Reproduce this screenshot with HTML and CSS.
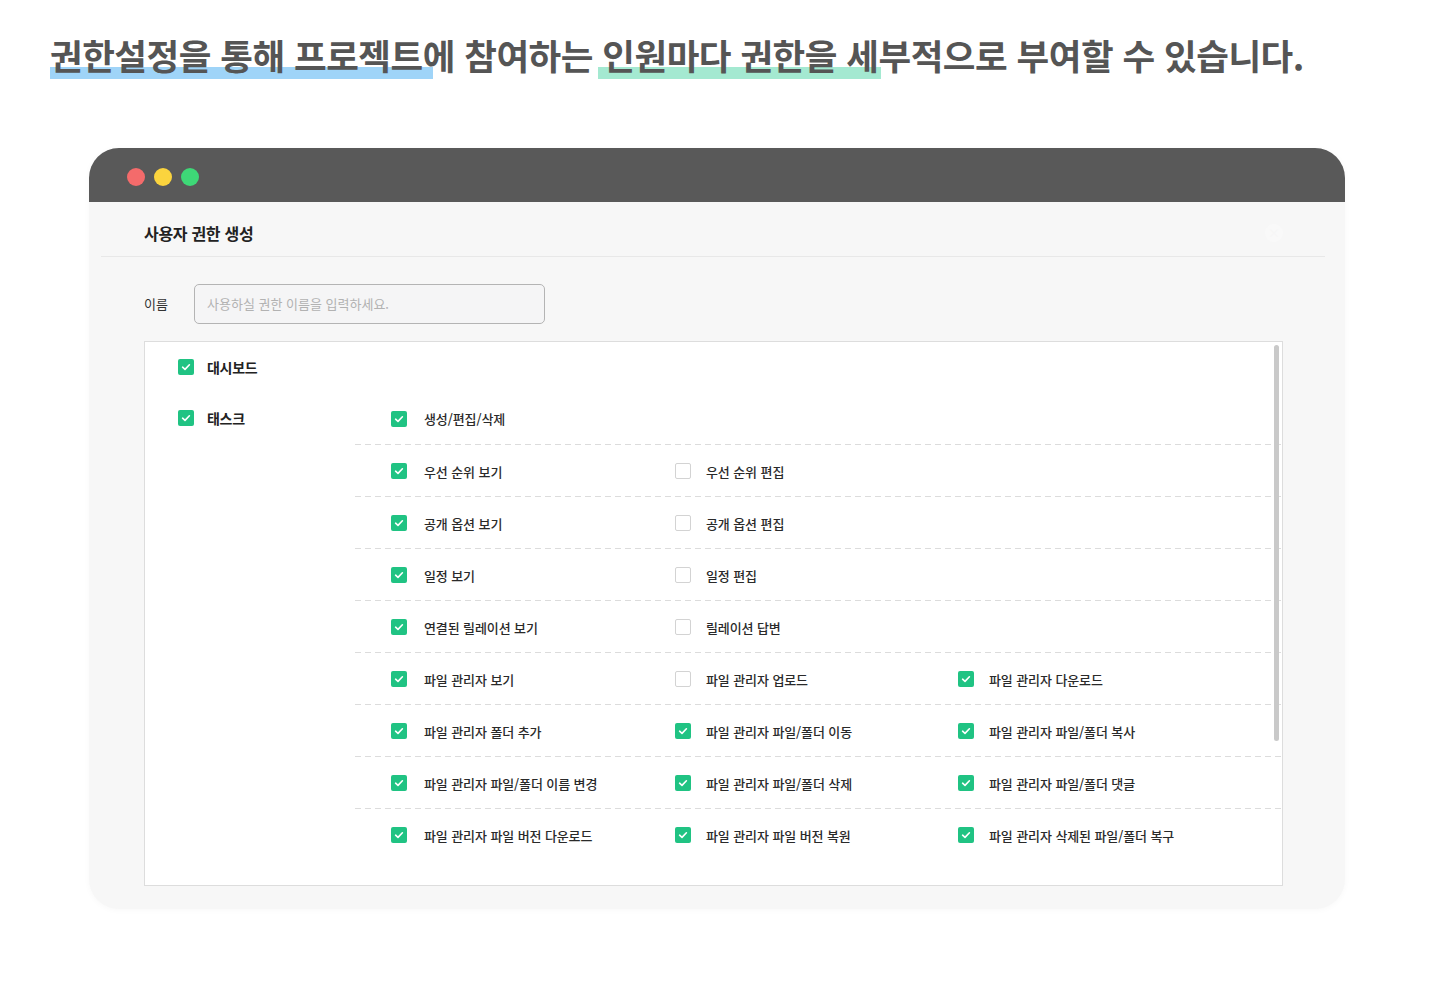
FILE: index.html
```html
<!DOCTYPE html>
<html lang="ko">
<head>
<meta charset="utf-8">
<title>사용자 권한 생성</title>
<link rel="stylesheet" href="styles.css">
</head>
<body>
<div class="page">
  <h1 class="headline"><span class="hl hl-blue">권한설정을 통해 프로젝트</span>에 참여하는 <span class="hl hl-green">인원마다 권한을</span> 세부적으로 부여할 수 있습니다.</h1>

  <div class="window">
    <div class="titlebar">
      <span class="dot dot-red"></span>
      <span class="dot dot-yellow"></span>
      <span class="dot dot-green"></span>
    </div>
    <div class="dialog-head">
      <span class="dialog-title">사용자 권한 생성</span>
      <span class="close-btn">×</span>
    </div>
    <div class="form-row">
      <span class="form-label">이름</span>
      <div class="input">사용하실 권한 이름을 입력하세요.</div>
    </div>

    <div class="perm-box">
      <div class="scrollbar"></div>
      <div class="perm-top">
        <span class="cb on"><svg viewBox="0 0 16 16"><path d="M4.6 8.2 L7 10.4 L11.4 5.8"/></svg></span>
        <span class="group-name">대시보드</span>
      </div>
      <div class="group">
        <div class="group-label">
          <span class="cb on"><svg viewBox="0 0 16 16"><path d="M4.6 8.2 L7 10.4 L11.4 5.8"/></svg></span>
          <span class="group-name">태스크</span>
        </div>
        <div class="group-items">
          <div class="item-row">
            <div class="cell"><span class="cb on"><svg viewBox="0 0 16 16"><path d="M4.6 8.2 L7 10.4 L11.4 5.8"/></svg></span><span class="item-label">생성/편집/삭제</span></div>
          </div>
          <div class="item-row">
            <div class="cell"><span class="cb on"><svg viewBox="0 0 16 16"><path d="M4.6 8.2 L7 10.4 L11.4 5.8"/></svg></span><span class="item-label">우선 순위 보기</span></div>
            <div class="cell"><span class="cb off"></span><span class="item-label">우선 순위 편집</span></div>
          </div>
          <div class="item-row">
            <div class="cell"><span class="cb on"><svg viewBox="0 0 16 16"><path d="M4.6 8.2 L7 10.4 L11.4 5.8"/></svg></span><span class="item-label">공개 옵션 보기</span></div>
            <div class="cell"><span class="cb off"></span><span class="item-label">공개 옵션 편집</span></div>
          </div>
          <div class="item-row">
            <div class="cell"><span class="cb on"><svg viewBox="0 0 16 16"><path d="M4.6 8.2 L7 10.4 L11.4 5.8"/></svg></span><span class="item-label">일정 보기</span></div>
            <div class="cell"><span class="cb off"></span><span class="item-label">일정 편집</span></div>
          </div>
          <div class="item-row">
            <div class="cell"><span class="cb on"><svg viewBox="0 0 16 16"><path d="M4.6 8.2 L7 10.4 L11.4 5.8"/></svg></span><span class="item-label">연결된 릴레이션 보기</span></div>
            <div class="cell"><span class="cb off"></span><span class="item-label">릴레이션 답변</span></div>
          </div>
          <div class="item-row">
            <div class="cell"><span class="cb on"><svg viewBox="0 0 16 16"><path d="M4.6 8.2 L7 10.4 L11.4 5.8"/></svg></span><span class="item-label">파일 관리자 보기</span></div>
            <div class="cell"><span class="cb off"></span><span class="item-label">파일 관리자 업로드</span></div>
            <div class="cell"><span class="cb on"><svg viewBox="0 0 16 16"><path d="M4.6 8.2 L7 10.4 L11.4 5.8"/></svg></span><span class="item-label">파일 관리자 다운로드</span></div>
          </div>
          <div class="item-row">
            <div class="cell"><span class="cb on"><svg viewBox="0 0 16 16"><path d="M4.6 8.2 L7 10.4 L11.4 5.8"/></svg></span><span class="item-label">파일 관리자 폴더 추가</span></div>
            <div class="cell"><span class="cb on"><svg viewBox="0 0 16 16"><path d="M4.6 8.2 L7 10.4 L11.4 5.8"/></svg></span><span class="item-label">파일 관리자 파일/폴더 이동</span></div>
            <div class="cell"><span class="cb on"><svg viewBox="0 0 16 16"><path d="M4.6 8.2 L7 10.4 L11.4 5.8"/></svg></span><span class="item-label">파일 관리자 파일/폴더 복사</span></div>
          </div>
          <div class="item-row">
            <div class="cell"><span class="cb on"><svg viewBox="0 0 16 16"><path d="M4.6 8.2 L7 10.4 L11.4 5.8"/></svg></span><span class="item-label">파일 관리자 파일/폴더 이름 변경</span></div>
            <div class="cell"><span class="cb on"><svg viewBox="0 0 16 16"><path d="M4.6 8.2 L7 10.4 L11.4 5.8"/></svg></span><span class="item-label">파일 관리자 파일/폴더 삭제</span></div>
            <div class="cell"><span class="cb on"><svg viewBox="0 0 16 16"><path d="M4.6 8.2 L7 10.4 L11.4 5.8"/></svg></span><span class="item-label">파일 관리자 파일/폴더 댓글</span></div>
          </div>
          <div class="item-row">
            <div class="cell"><span class="cb on"><svg viewBox="0 0 16 16"><path d="M4.6 8.2 L7 10.4 L11.4 5.8"/></svg></span><span class="item-label">파일 관리자 파일 버전 다운로드</span></div>
            <div class="cell"><span class="cb on"><svg viewBox="0 0 16 16"><path d="M4.6 8.2 L7 10.4 L11.4 5.8"/></svg></span><span class="item-label">파일 관리자 파일 버전 복원</span></div>
            <div class="cell"><span class="cb on"><svg viewBox="0 0 16 16"><path d="M4.6 8.2 L7 10.4 L11.4 5.8"/></svg></span><span class="item-label">파일 관리자 삭제된 파일/폴더 복구</span></div>
          </div>
        </div>
      </div>
    </div>
  </div>
</div>
</body>
</html>
```

FILE: styles.css
```css
* { box-sizing: border-box; }

body {
  margin: 0;
  background: #ffffff;
  font-family: "Noto Sans CJK KR", "Noto Sans", sans-serif;
  color: #222;
}

.page {
  padding: 29px 0 40px 50px;
}

.headline {
  margin: 0;
  font-size: 35.5px;
  font-weight: 700;
  line-height: 52px;
  letter-spacing: -0.5px;
  color: #555555;
  white-space: nowrap;
  position: relative;
  isolation: isolate;
}

.hl {
  position: relative;
}

.hl::after {
  content: "";
  position: absolute;
  left: 0;
  right: 0;
  bottom: 1px;
  height: 12px;
  z-index: -1;
}

.hl-blue::after {
  right: -10px;
  background: #9fd4f8;
}

.hl-green::after {
  left: -4px;
  right: -44px;
  background: #a4e9d1;
}

.window {
  margin: 67px 0 0 39px;
  width: 1256px;
  border-radius: 30px;
  background: #f7f7f7;
  overflow: hidden;
  box-shadow: 0 1px 6px rgba(0, 0, 0, 0.03);
}

.titlebar {
  height: 54px;
  background: #595959;
  display: flex;
  align-items: center;
  gap: 9px;
  padding: 4px 0 0 38px;
}

.dot {
  width: 18px;
  height: 18px;
  border-radius: 50%;
}

.dot-red { background: #f46b6b; }
.dot-yellow { background: #fbd43e; }
.dot-green { background: #3ed877; }

.dialog-head {
  height: 55px;
  margin: 0 20px 0 12px;
  padding: 8px 43px 0;
  border-bottom: 1px solid #e8e8e8;
  display: flex;
  align-items: center;
  justify-content: space-between;
}

.dialog-title {
  font-size: 16px;
  font-weight: 700;
  color: #222;
  letter-spacing: -0.3px;
}

.close-btn {
  width: 18px;
  height: 18px;
  border-radius: 50%;
  background: #f9f9f9;
  color: #f6f6f6;
  font-size: 12px;
  line-height: 18px;
  text-align: center;
  margin-right: -1px;
}

.form-row {
  display: flex;
  align-items: center;
  padding: 27px 0 0 55px;
}

.form-label {
  width: 50px;
  font-size: 13px;
  color: #333;
  padding-bottom: 2px;
}

.input {
  width: 351px;
  height: 40px;
  border: 1px solid #b4b4b4;
  border-radius: 5px;
  background: #f5f5f6;
  padding: 0 12px 2px;
  display: flex;
  align-items: center;
  font-size: 13px;
  color: #b2b2b2;
}

.perm-box {
  position: relative;
  margin: 17px 62px 23px 55px;
  background: #ffffff;
  border: 1px solid #dddddd;
  padding-bottom: 24px;
}

.scrollbar {
  position: absolute;
  right: 3px;
  top: 3px;
  width: 5px;
  height: 396px;
  border-radius: 3px;
  background: #c9c9c9;
}

.perm-top {
  height: 50px;
  display: flex;
  align-items: center;
  gap: 13px;
  padding-left: 33px;
}

.group {
  display: flex;
}

.group-label {
  width: 210px;
  height: 52px;
  flex-shrink: 0;
  display: flex;
  align-items: center;
  gap: 13px;
  padding-left: 33px;
}

.group-name {
  font-size: 14px;
  font-weight: 700;
  color: #222;
  letter-spacing: -0.3px;
}

.group-items {
  flex: 1;
}

.item-row {
  height: 52px;
  display: grid;
  grid-template-columns: 284px 283px 284px;
  background-image: linear-gradient(to right, #dcdcdc 60%, transparent 60%);
  background-size: 10px 1px;
  background-repeat: repeat-x;
  background-position: left bottom;
}

.item-row:first-child {
  height: 53px;
}

.item-row:last-child {
  background-image: none;
}

.cell {
  display: flex;
  align-items: center;
  gap: 15px;
  padding-left: 36px;
}

.cell:first-child {
  gap: 17px;
}

.item-label {
  font-size: 13px;
  font-weight: 500;
  color: #2a2a2a;
  letter-spacing: -0.1px;
  white-space: nowrap;
}

.cb {
  width: 16px;
  height: 16px;
  flex-shrink: 0;
  border-radius: 2px;
  display: inline-flex;
}

.cb.on {
  background: #20c383;
}

.cb.off {
  background: #ffffff;
  border: 1px solid #d3d3d3;
}

.cb svg {
  width: 16px;
  height: 16px;
  fill: none;
  stroke: #ffffff;
  stroke-width: 1.6;
  stroke-linecap: round;
  stroke-linejoin: round;
}
```
